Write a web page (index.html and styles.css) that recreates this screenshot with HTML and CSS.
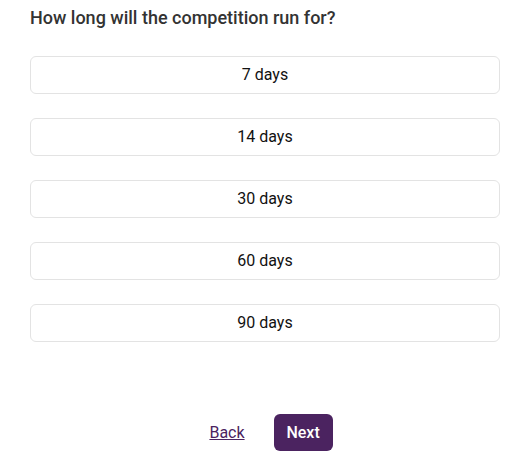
FILE: index.html
```html
<!DOCTYPE html>
<html>
<head>
<meta charset="utf-8">
<link rel="stylesheet" href="styles.css">
</head>
<body>
<div class="page">
  <h2 class="question">How long will the competition run for?</h2>
  <div class="options">
    <button class="option">7 days</button>
    <button class="option">14 days</button>
    <button class="option">30 days</button>
    <button class="option">60 days</button>
    <button class="option">90 days</button>
  </div>
  <div class="actions">
    <a class="back" href="#">Back</a>
    <button class="next">Next</button>
  </div>
</div>
</body>
</html>
```
FILE: styles.css
```css
html, body {
  margin: 0;
  padding: 0;
  background: #fff;
  font-family: Roboto, "Liberation Sans", sans-serif;
}
.page {
  padding: 0 30px;
}
.question {
  margin: 0;
  padding-top: 6px;
  font-size: 18px;
  line-height: 24px;
  font-weight: 500;
  color: #333;
}
.options {
  display: flex;
  flex-direction: column;
  gap: 24px;
  margin-top: 26px;
}
.option {
  display: block;
  width: 100%;
  height: 38px;
  box-sizing: border-box;
  border: 1px solid #e3e3e3;
  border-radius: 6px;
  background: #fff;
  font-family: Roboto, "Liberation Sans", sans-serif;
  font-size: 16px;
  line-height: 20px;
  color: #111;
  padding: 0 0 1px;
}
.actions {
  display: flex;
  justify-content: center;
  align-items: center;
  gap: 17px;
  margin-top: 72px;
}
.back {
  padding: 0 12px;
  font-size: 16px;
  color: #4b2360;
  text-decoration: underline;
}
.next {
  width: 59px;
  height: 37px;
  border: none;
  border-radius: 6px;
  background: #4b2360;
  color: #fff;
  font-family: Roboto, "Liberation Sans", sans-serif;
  font-size: 16px;
  font-weight: 500;
  padding: 0;
}
```
